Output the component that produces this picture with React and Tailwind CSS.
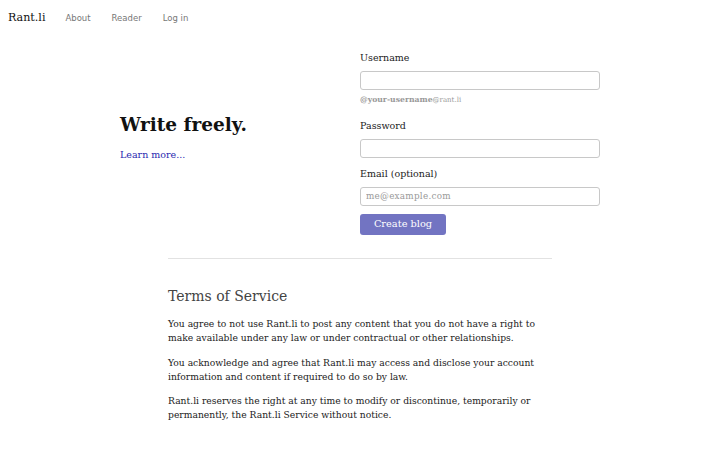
import React from 'react';

const serif = { fontFamily: '"DejaVu Serif", serif' };

const Field = ({ label, type = 'text', placeholder, children }) => (
  <div>
    <label className="block text-[9.5px] text-[#222] leading-[14px]">{label}</label>
    <input
      type={type}
      placeholder={placeholder}
      className="mt-[6px] block w-[240px] h-[19px] rounded-[3px] border border-[#c8c8c8] bg-white px-[5px] text-[8.8px] tracking-[0.03em] text-[#333] placeholder:text-[#999] outline-none"
      style={serif}
    />
    {children}
  </div>
);

const App = () => {
  return (
    <div className="min-h-[450px] w-[720px] bg-white text-[#111]" style={serif}>
      <nav className="flex items-center h-[34px] pt-[2px] px-[8px]">
        <a className="text-[11.1px] text-[#111] mr-[20px]">Rant.li</a>
        <div className="flex gap-[21px] text-[8.5px] text-[#777]" style={{ fontFamily: '"DejaVu Sans", sans-serif' }}>
          <a>About</a>
          <a>Reader</a>
          <a>Log in</a>
        </div>
      </nav>

      <div className="flex w-[480px] ml-[120px] mt-[17px]">
        <div className="w-[240px] pt-[62px]">
          <h1 className="text-[18.5px] font-bold leading-[24px] text-[#111]">Write freely.</h1>
          <a className="block mt-[11px] text-[9.5px] text-[#2a2ab0]">Learn more...</a>
        </div>
        <div className="w-[240px] flex flex-col">
          <Field label="Username">
            <p className="mt-[4px] text-[7.7px] text-[#999]">
              <span className="font-bold">@your-username</span>
              <span className="text-[7px]">@rant.li</span>
            </p>
          </Field>
          <div className="mt-[13px]">
            <Field label="Password" type="password" />
          </div>
          <div className="mt-[9px]">
            <Field label="Email (optional)" type="email" placeholder="me@example.com" />
          </div>
          <button
            className="mt-[8px] w-[86px] h-[21px] rounded-[3px] bg-[#7274c2] text-white text-[9.8px]"
            style={serif}
          >
            Create blog
          </button>
        </div>
      </div>

      <div className="w-[384px] ml-[168px] mt-[23px] border-t border-[#e2e2e2]" />

      <div className="w-[384px] ml-[168px] mt-[28px] text-[#222]">
        <h2 className="text-[14px] text-[#444] leading-[18px]">Terms of Service</h2>
        <p className="mt-[12px] text-[9.2px] leading-[14px]">
          You agree to not use Rant.li to post any content that you do not have a right to make available under any law or under contractual or other relationships.
        </p>
        <p className="mt-[11px] text-[9.2px] leading-[14px]">
          You acknowledge and agree that Rant.li may access and disclose your account information and content if required to do so by law.
        </p>
        <p className="mt-[10px] text-[9.2px] leading-[14px]">
          Rant.li reserves the right at any time to modify or discontinue, temporarily or permanently, the Rant.li Service without notice.
        </p>
      </div>
    </div>
  );
};

export default App;
